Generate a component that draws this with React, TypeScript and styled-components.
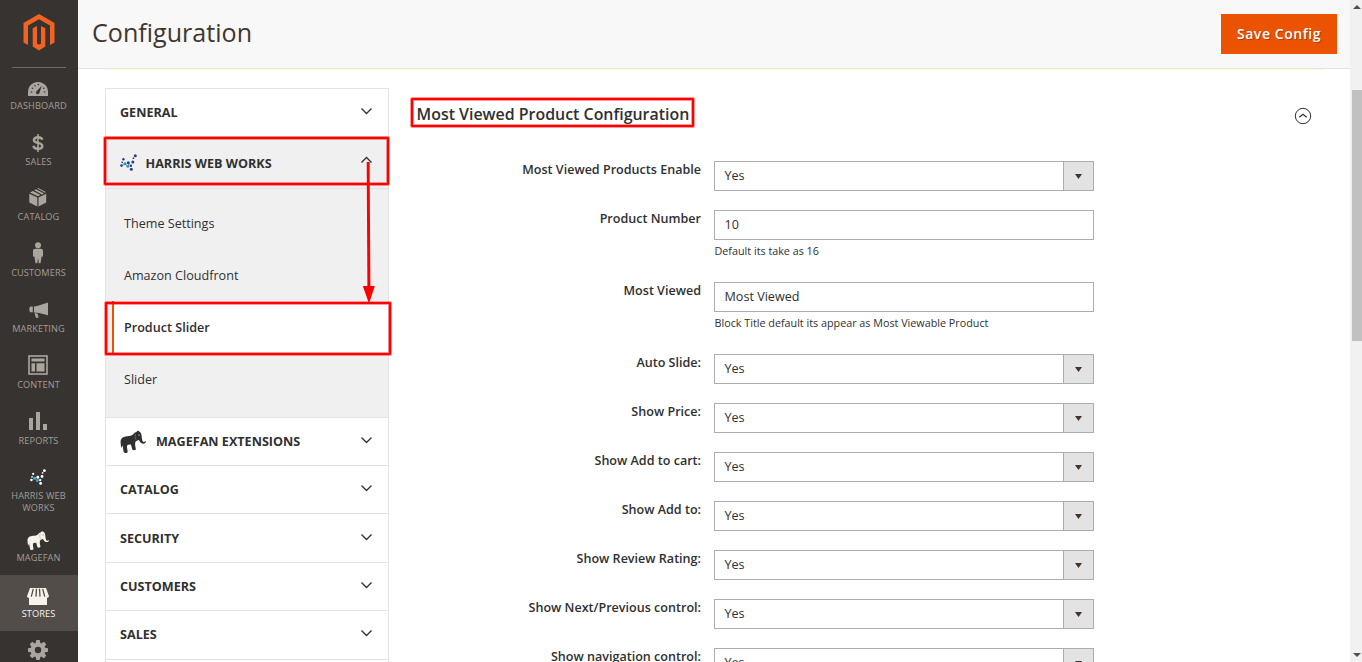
import React from 'react';
import styled, { createGlobalStyle } from 'styled-components';

const GlobalStyle = createGlobalStyle`
  *, *::before, *::after { box-sizing: border-box; }
  body {
    margin: 0;
    overflow: hidden;
    background: #fff;
    color: #303030;
    font-family: 'Open Sans', 'Noto Sans', sans-serif;
  }
`;

const Page = styled.div`
  position: relative;
  display: flex;
  width: 1362px;
  height: 662px;
  overflow: hidden;
`;

/* ---------- Left admin menu ---------- */

const Menu = styled.nav`
  flex: none;
  display: flex;
  flex-direction: column;
  width: 78px;
  height: 662px;
  overflow: hidden;
  background: #373330;
`;

const MenuLogo = styled.div`
  flex: none;
  display: flex;
  justify-content: center;
  height: 68px;
  margin: 0 12px;
  padding: 14px 1px 0 0;
  border-bottom: 1px solid #736963;
`;

const MenuItem = styled.a<{ $active?: boolean; $tall?: boolean }>`
  flex: none;
  display: flex;
  flex-direction: column;
  align-items: center;
  height: ${(p) => (p.$tall ? 61.6 : 55.8)}px;
  padding: 9px 1px 0 0;
  background: ${(p) => (p.$active ? '#524d49' : 'transparent')};
  color: ${(p) => (p.$active ? '#f7f3eb' : '#a19d96')};
  font-size: 9.2px;
  letter-spacing: 0.1px;
  line-height: 12px;
  text-align: center;
  text-transform: uppercase;

  &:first-of-type { margin-top: -1.15px; }
`;

const MenuIcon = styled.span<{ $active?: boolean }>`
  display: flex;
  align-items: center;
  justify-content: center;
  height: 22px;
  margin-bottom: 2px;
  padding-right: 1px;
  color: ${(p) => (p.$active ? '#f7f3eb' : '#aaa69d')};
  svg { display: block; }
`;

/* ---------- Main column ---------- */

const Main = styled.main`
  flex: none;
  display: flex;
  flex-direction: column;
  width: 1272px;
  height: 662px;
  overflow: hidden;
`;

const Header = styled.header`
  flex: none;
  display: flex;
  align-items: flex-start;
  justify-content: space-between;
  height: 69px;
  padding: 14px 13px 0 14px;
  background: #f8f8f8;
  border-bottom: 1px solid #e3e3e3;
`;

const Title = styled.h1`
  margin: 0;
  color: #41362f;
  font-size: 25.1px;
  font-weight: 400;
  line-height: 37px;
`;

const SaveButton = styled.button`
  width: 116px;
  height: 40px;
  padding: 0;
  border: 0;
  background: #eb5202;
  color: #fff;
  font: 600 14px/40px 'Open Sans', sans-serif;
  letter-spacing: 0.55px;
  text-shadow: 1px 1px 0 rgba(0, 0, 0, 0.25);
`;

const NoticeEdge = styled.div`
  flex: none;
  height: 1px;
  margin: 0 27px;
  background: #fffbd0;
`;

const Body = styled.div`
  display: flex;
  align-items: flex-start;
  gap: 22px;
  padding: 18px 27px 0;
`;

/* ---------- Configuration tabs ---------- */

const Tabs = styled.aside`
  flex: none;
  width: 284px;
  border: 1px solid #e3e3e3;
`;

const Tab = styled.div<{ $open?: boolean }>`
  display: flex;
  align-items: center;
  height: ${(p) => (p.$open ? 52 : 48.4)}px;
  padding: 0 15px ${(p) => (p.$open ? 0 : 2)}px 14px;
  border-bottom: 1px solid #e3e3e3;
  background: ${(p) => (p.$open ? '#f0f0f0' : '#fff')};
  font-size: 12.6px;
  font-weight: 700;
  line-height: 20px;

  &:first-child { height: 47.9px; }
  > svg { flex: none; }
`;

const TabName = styled.span<{ $gap?: number }>`
  flex: 1;
  margin-left: ${(p) => p.$gap || 0}px;
  padding-top: 3px;
  text-transform: uppercase;
`;

const SubList = styled.div`
  height: 228.7px;
  padding: 8px 0 12px 6px;
  border-bottom: 1px solid #e3e3e3;
  background: #f0f0f0;
`;

const SubItem = styled.a<{ $active?: boolean }>`
  display: block;
  height: 52px;
  padding-left: ${(p) => (p.$active ? 10 : 12)}px;
  border-left: ${(p) => (p.$active ? '2px solid #eb5202' : '0')};
  background: ${(p) => (p.$active ? '#fff' : 'transparent')};
  font-size: 12.6px;
  font-weight: ${(p) => (p.$active ? 600 : 400)};
  line-height: 54px;
`;

/* ---------- Form ---------- */

const Content = styled.section`
  flex: 1;
  display: flex;
  flex-direction: column;
`;

const SectionHead = styled.div`
  display: flex;
  justify-content: space-between;
  height: 73px;
  padding: 14px 11px 0 5.500px;

  svg { margin-top: 5px; }
`;

const SectionTitle = styled.h2`
  margin: 0;
  font-size: 15.93px;
  font-weight: 600;
  line-height: 24px;
`;

const Field = styled.div<{ $noted?: boolean }>`
  display: grid;
  grid-template-columns: 290px 380px;
  column-gap: 13px;
  align-items: start;
  height: ${(p) => (p.$noted ? 72 : 49)}px;
`;

const Label = styled.label`
  font-size: 12.57px;
  font-weight: 600;
  line-height: 17px;
  text-align: right;
  white-space: nowrap;
`;

const Control = styled.div`
  display: flex;
  height: 30px;
  border: 1px solid #adadad;
  background: #fff;
  font-size: 12.6px;
  line-height: 28px;
`;

const Value = styled.span`
  flex: 1;
  padding-left: 9.500px;
`;

const Arrow = styled.span`
  display: flex;
  align-items: center;
  justify-content: center;
  width: 30px;
  border-left: 1px solid #adadad;
  background: #e3e3e3;

  &::after {
    content: '';
    width: 7px;
    height: 5px;
    margin-top: 1px;
    background: #41362f;
    clip-path: polygon(0 0, 100% 0, 50% 100%);
  }
`;

const Note = styled.p`
  margin: 3px 0 0;
  padding-left: 0.5px;
  font-size: 10.77px;
  line-height: 15px;
`;

/* ---------- Scrollbar ---------- */

const Scrollbar = styled.div`
  flex: none;
  display: flex;
  flex-direction: column;
  align-items: flex-end;
  width: 12px;
  height: 662px;
  background: #f1f1f1;
`;

const ScrollUp = styled.div`
  width: 0;
  height: 0;
  margin: 5px 1px 81px 0;
  border: 4px solid transparent;
  border-top: 0;
  border-bottom: 4px solid #505050;
`;

const ScrollThumb = styled.div`
  width: 10px;
  height: 251px;
  background: #c1c1c1;
`;

const ScrollDown = styled.div`
  width: 0;
  height: 0;
  margin: 312px 1px 0 0;
  border: 4px solid transparent;
  border-bottom: 0;
  border-top: 4px solid #505050;
`;

/* ---------- Annotations lying over the page ---------- */

const Highlight = styled.div<{ $x: number; $y: number; $w: number; $h: number }>`
  position: absolute;
  left: ${(p) => p.$x}px;
  top: ${(p) => p.$y}px;
  width: ${(p) => p.$w}px;
  height: ${(p) => p.$h}px;
  border: 2px solid #f00;
  border-radius: 1px;
  box-shadow: 0 0 0 1px rgba(255, 0, 0, 0.4), inset 0 0 0 1px rgba(255, 0, 0, 0.4);
`;

const Pointer = styled.svg`
  position: absolute;
  left: 360px;
  top: 162px;
`;

/* ---------- Drawings ---------- */

const Logo = () => (
  <svg width="32" height="38" viewBox="0 0 32 38" fill="#f26322">
    <path d="M16 0 31.500 9v19.500l-4.500 2.600V11.600L16 5.300 5 11.600v19.500L.5 28.500V9Z" />
    <path d="M14 12v17.500l2 1.300 2-1.300V12l4.300 2.200v18.300L16 36.500l-6.300-4V14.200Z" />
  </svg>
);

const Chevron = ({ up }: { up?: boolean }) => (
  <svg width="13" height={up ? 13 : 9} viewBox={up ? '0 0 13 13' : '0 0 13 9'} fill="none" stroke="#303030" strokeWidth="1.300">
    <path d={up ? 'M1.500 6.500 6.500 1.500l5 5' : 'M1.500 1.500l5 5 5-5'} />
  </svg>
);

const Molecule = ({ size, dark }: { size: number; dark?: boolean }) => {
  const a = dark ? '#24407f' : '#ffffff';
  const b = dark ? '#2f8fb8' : '#35b5ee';
  return (
    <svg width={size} height={size} viewBox="0 0 17 17" fill={a}>
      <path d="M2.500 11.300 5 10l3 2.500L9 9.500" fill="none" stroke={b} strokeWidth="0.900" />
      <circle cx="3.400" cy="5.300" r="1.200" />
      <circle cx="1.500" cy="11.600" r="1.300" />
      <circle cx="2.200" cy="8.300" r="0.900" />
      <circle cx="5" cy="9.800" r="1.500" fill={b} />
      <circle cx="8.300" cy="8.800" r="1.500" />
      <circle cx="7.800" cy="12.500" r="1.300" fill={b} />
      <circle cx="11.300" cy="15.300" r="1.500" />
      <circle cx="10.800" cy="11.800" r="1.300" />
      <circle cx="12.800" cy="8" r="1.500" />
      <circle cx="15.300" cy="1.800" r="1.500" />
      <circle cx="13.400" cy="4.200" r="0.900" />
    </svg>
  );
};

const Elephant = ({ width, color, eye }: { width: number; color: string; eye: string }) => (
  <svg width={width} height={width} viewBox="0 -2.500 26 26" fill={color}>
    <path d="M.6 13C.3 9 3 7 7.200 6.700c2.600-.2 4.300-.4 6-1.900C14.500 3 15.800 2.800 16.500 2.600 17.200.900 18.600.9 19.300 2c1.900 1 2.300 3.200 2.500 6 .3 3.200 1 4.800 2.300 4.500.8-.1.8-.9 1.400-.9.500.1.300 1.400-.3 1.900-1.600 1.200-4.200.8-5.400-1.400l-.9-1.500c-1.300.6-2.800.6-3.600 1.900l-.2 3 .8 4.300c-.4 1.100-2.900 1.300-3.600.2L10.900 15l-3.100.3c-1 1-.9 2-.6 4l.5 3.400c-.6 1-3.300 1.100-3.900.1-.6-2.500-.8-4.500-1.300-6.700-.9 1-.6 2-1.100 2.300C.8 16.800.8 14.500.6 13Z" />
    <path d="M15.600 4.500c-.8 2-.7 4.200.6 5.800" fill="none" stroke={eye} strokeWidth="0.500" />
    <circle cx="19" cy="5.600" r="0.800" fill={eye} />
  </svg>
);

const Dashboard = () => (
  <svg width="20" height="18" viewBox="0 -4 20 18">
    <path d="M0 14V10C0 4.200 4.500 0 10 0s10 4.200 10 10v4Z" fill="#aaa69d" />
    <g fill="#373330">
      <path d="M13.800 3.800 11.600 10.300a1.800 1.800 0 1 1-2.600-1.500Z" />
      <circle cx="3.500" cy="10" r=".8" />
      <circle cx="4.500" cy="6.300" r=".8" />
      <circle cx="7" cy="3.700" r=".8" />
      <circle cx="10.300" cy="2.600" r=".8" />
      <circle cx="15.800" cy="6.300" r=".8" />
      <circle cx="16.500" cy="10" r=".8" />
    </g>
  </svg>
);

const Dollar = () => (
  <svg width="12" height="18" viewBox="0 0 12 18" fill="none" stroke="#aaa69d" strokeWidth="2.400">
    <path d="M10.300 5.800C10 4 8.300 3.200 6 3.200 3.500 3.200 1.900 4.200 1.900 5.900c0 4.100 8.400 2 8.400 6.100 0 1.800-1.700 2.800-4.300 2.800-2.700 0-4.300-1-4.600-3" />
    <path d="M6 0v18" strokeWidth="1.600" />
  </svg>
);

const Box = () => (
  <svg width="18" height="20" viewBox="0 0 18 20" fill="#aaa69d">
    <path d="M.3 5.800 8.300 9.400V18.500L.3 14.500ZM17.200 5.800 9.500 9.400V18.500L17.200 14.500ZM5.200 2.200 7 1.300 15 5.400 13 6.400ZM8.200.6 9.200 0 16.800 4.100 16 4.700ZM1 4.500 3.900 3 11.500 6.900 8.900 8.200Z" />
  </svg>
);

const Person = () => (
  <svg width="10" height="24" viewBox="0 0 10 24" fill="#aaa69d">
    <circle cx="5" cy="3.200" r="3" />
    <path d="M2.200 6.800h5.600C9.200 6.800 10 7.700 10 9v5.500H8.600L7.500 21.200H5.800L5 16l-.8 5.200H2.500L1.400 14.500H0V9c0-1.300.8-2.200 2.200-2.200Z" />
  </svg>
);

const Megaphone = () => (
  <svg width="19" height="16" viewBox="0 0 19 16" fill="#aaa69d">
    <path d="M19 .5v12.800L10 11l-5-.6V4.500l4-.7ZM3.800 4.500v5.800H1.500C0 10 0 5 1.500 4.500ZM5.500 11.200l3 .4 1.200 3.800-2.700.6Z" />
  </svg>
);

const Layout = () => (
  <svg width="20" height="22" viewBox="0 0 20 22">
    <rect x="1" y="1" width="18" height="18" fill="none" stroke="#aaa69d" strokeWidth="1.600" />
    <path d="M3.500 3.500h13V6.500h-13ZM3.500 8.200H7V16.500H3.500ZM8.500 8.200h8V16.500h-8Z" fill="#aaa69d" />
  </svg>
);

const Bars = () => (
  <svg width="18" height="20" viewBox="0 0 18 20" fill="#aaa69d">
    <path d="M0 6h4v12H0ZM7 0h4v18H7ZM14 12h4v6h-4Z" />
  </svg>
);

const Shop = () => (
  <svg width="22" height="21" viewBox="0 -4 22 21">
    <path d="M3 0h16l3 8.200c-.4 1.200-1.400 1.600-2 1.600V17H2V9.800C1 9.800.2 9.200 0 8.200Z" fill="#f7f3eb" />
    <path d="M6.300.8 4.300 8.600M9.500.8 9 8.600M12.500.8 13 8.600M15.700.8 17.700 8.600" stroke="#524d49" strokeWidth="1.300" fill="none" />
  </svg>
);

const Gear = () => (
  <svg width="20" height="22" viewBox="0 0 20 22">
    <g fill="#aaa69d">
      {[0, 45, 90, 135].map((r) => (
        <path key={r} d="M8.300 0h3.400l.8 4v12l-.8 4H8.300l-.8-4V4Z" transform={`rotate(${r} 10 10)`} />
      ))}
      <circle cx="10" cy="10" r="7.300" />
    </g>
    <circle cx="10" cy="10" r="3.200" fill="#373330" />
  </svg>
);

const CollapseIcon = () => (
  <svg width="18" height="18" viewBox="0 0 18 18" fill="none" stroke="#303030">
    <circle cx="9" cy="9" r="7.700" strokeWidth="1" />
    <path d="M5.300 10.300 9 7.300l3.700 3" strokeWidth="1.200" />
  </svg>
);

/* ---------- Data ---------- */

const menu: { name: React.ReactNode; icon: React.ReactNode; active?: boolean; tall?: boolean }[] = [
  { name: 'Dashboard', icon: <Dashboard /> },
  { name: 'Sales', icon: <Dollar /> },
  { name: 'Catalog', icon: <Box /> },
  { name: 'Customers', icon: <Person /> },
  { name: 'Marketing', icon: <Megaphone /> },
  { name: 'Content', icon: <Layout /> },
  { name: 'Reports', icon: <Bars /> },
  { name: <>Harris Web<br />Works</>, icon: <Molecule size={16} />, tall: true },
  { name: 'Magefan', icon: <Elephant width={22} color="#f7f3eb" eye="#8a8681" /> },
  { name: 'Stores', icon: <Shop />, active: true },
  { name: '', icon: <Gear /> },
];

const fields: { label: string; value: string; select?: boolean; note?: string }[] = [
  { label: 'Most Viewed Products Enable', value: 'Yes', select: true },
  { label: 'Product Number', value: '10', note: 'Default its take as 16' },
  { label: 'Most Viewed', value: 'Most Viewed', note: 'Block Title default its appear as Most Viewable Product' },
  { label: 'Auto Slide:', value: 'Yes', select: true },
  { label: 'Show Price:', value: 'Yes', select: true },
  { label: 'Show Add to cart:', value: 'Yes', select: true },
  { label: 'Show Add to:', value: 'Yes', select: true },
  { label: 'Show Review Rating:', value: 'Yes', select: true },
  { label: 'Show Next/Previous control:', value: 'Yes', select: true },
  { label: 'Show navigation control:', value: 'Yes', select: true },
];

export default function App() {
  return (
    <Page>
      <GlobalStyle />
      <Menu>
        <MenuLogo><Logo /></MenuLogo>
        {menu.map((m, i) => (
          <MenuItem key={i} $active={m.active} $tall={m.tall}>
            <MenuIcon $active={m.active}>{m.icon}</MenuIcon>
            <span>{m.name}</span>
          </MenuItem>
        ))}
      </Menu>
      <Main>
        <Header>
          <Title>Configuration</Title>
          <SaveButton>Save Config</SaveButton>
        </Header>
        <NoticeEdge />
        <Body>
          <Tabs>
            <Tab><TabName>General</TabName><Chevron /></Tab>
            <Tab $open>
              <Molecule size={17} dark />
              <TabName $gap={8.5}>Harris Web Works</TabName>
              <Chevron up />
            </Tab>
            <SubList>
              <SubItem>Theme Settings</SubItem>
              <SubItem>Amazon Cloudfront</SubItem>
              <SubItem $active>Product Slider</SubItem>
              <SubItem>Slider</SubItem>
            </SubList>
            <Tab>
              <Elephant width={26} color="#303030" eye="#999" />
              <TabName $gap={10}>Magefan Extensions</TabName>
              <Chevron />
            </Tab>
            {['Catalog', 'Security', 'Customers', 'Sales'].map((name) => (
              <Tab key={name}><TabName>{name}</TabName><Chevron /></Tab>
            ))}
            <Tab />
          </Tabs>
          <Content>
            <SectionHead>
              <SectionTitle>Most Viewed Product Configuration</SectionTitle>
              <CollapseIcon />
            </SectionHead>
            {fields.map((f) => (
              <Field key={f.label} $noted={!!f.note}>
                <Label>{f.label}</Label>
                <div>
                  <Control>
                    <Value>{f.value}</Value>
                    {f.select && <Arrow />}
                  </Control>
                  {f.note && <Note>{f.note}</Note>}
                </div>
              </Field>
            ))}
          </Content>
        </Body>
      </Main>
      <Scrollbar>
        <ScrollUp />
        <ScrollThumb />
        <ScrollDown />
      </Scrollbar>
      <Highlight $x={104} $y={137} $w={285} $h={48} />
      <Highlight $x={105} $y={302} $w={286} $h={53} />
      <Highlight $x={411} $y={98} $w={283} $h={29} />
      <Pointer width="18" height="142" viewBox="0 0 18 142" fill="#f00">
        <path d="M6.700 0h2.900l.8 125h-3Z" />
        <path d="M2.800 124h12L9 141.500Z" />
      </Pointer>
    </Page>
  );
}
